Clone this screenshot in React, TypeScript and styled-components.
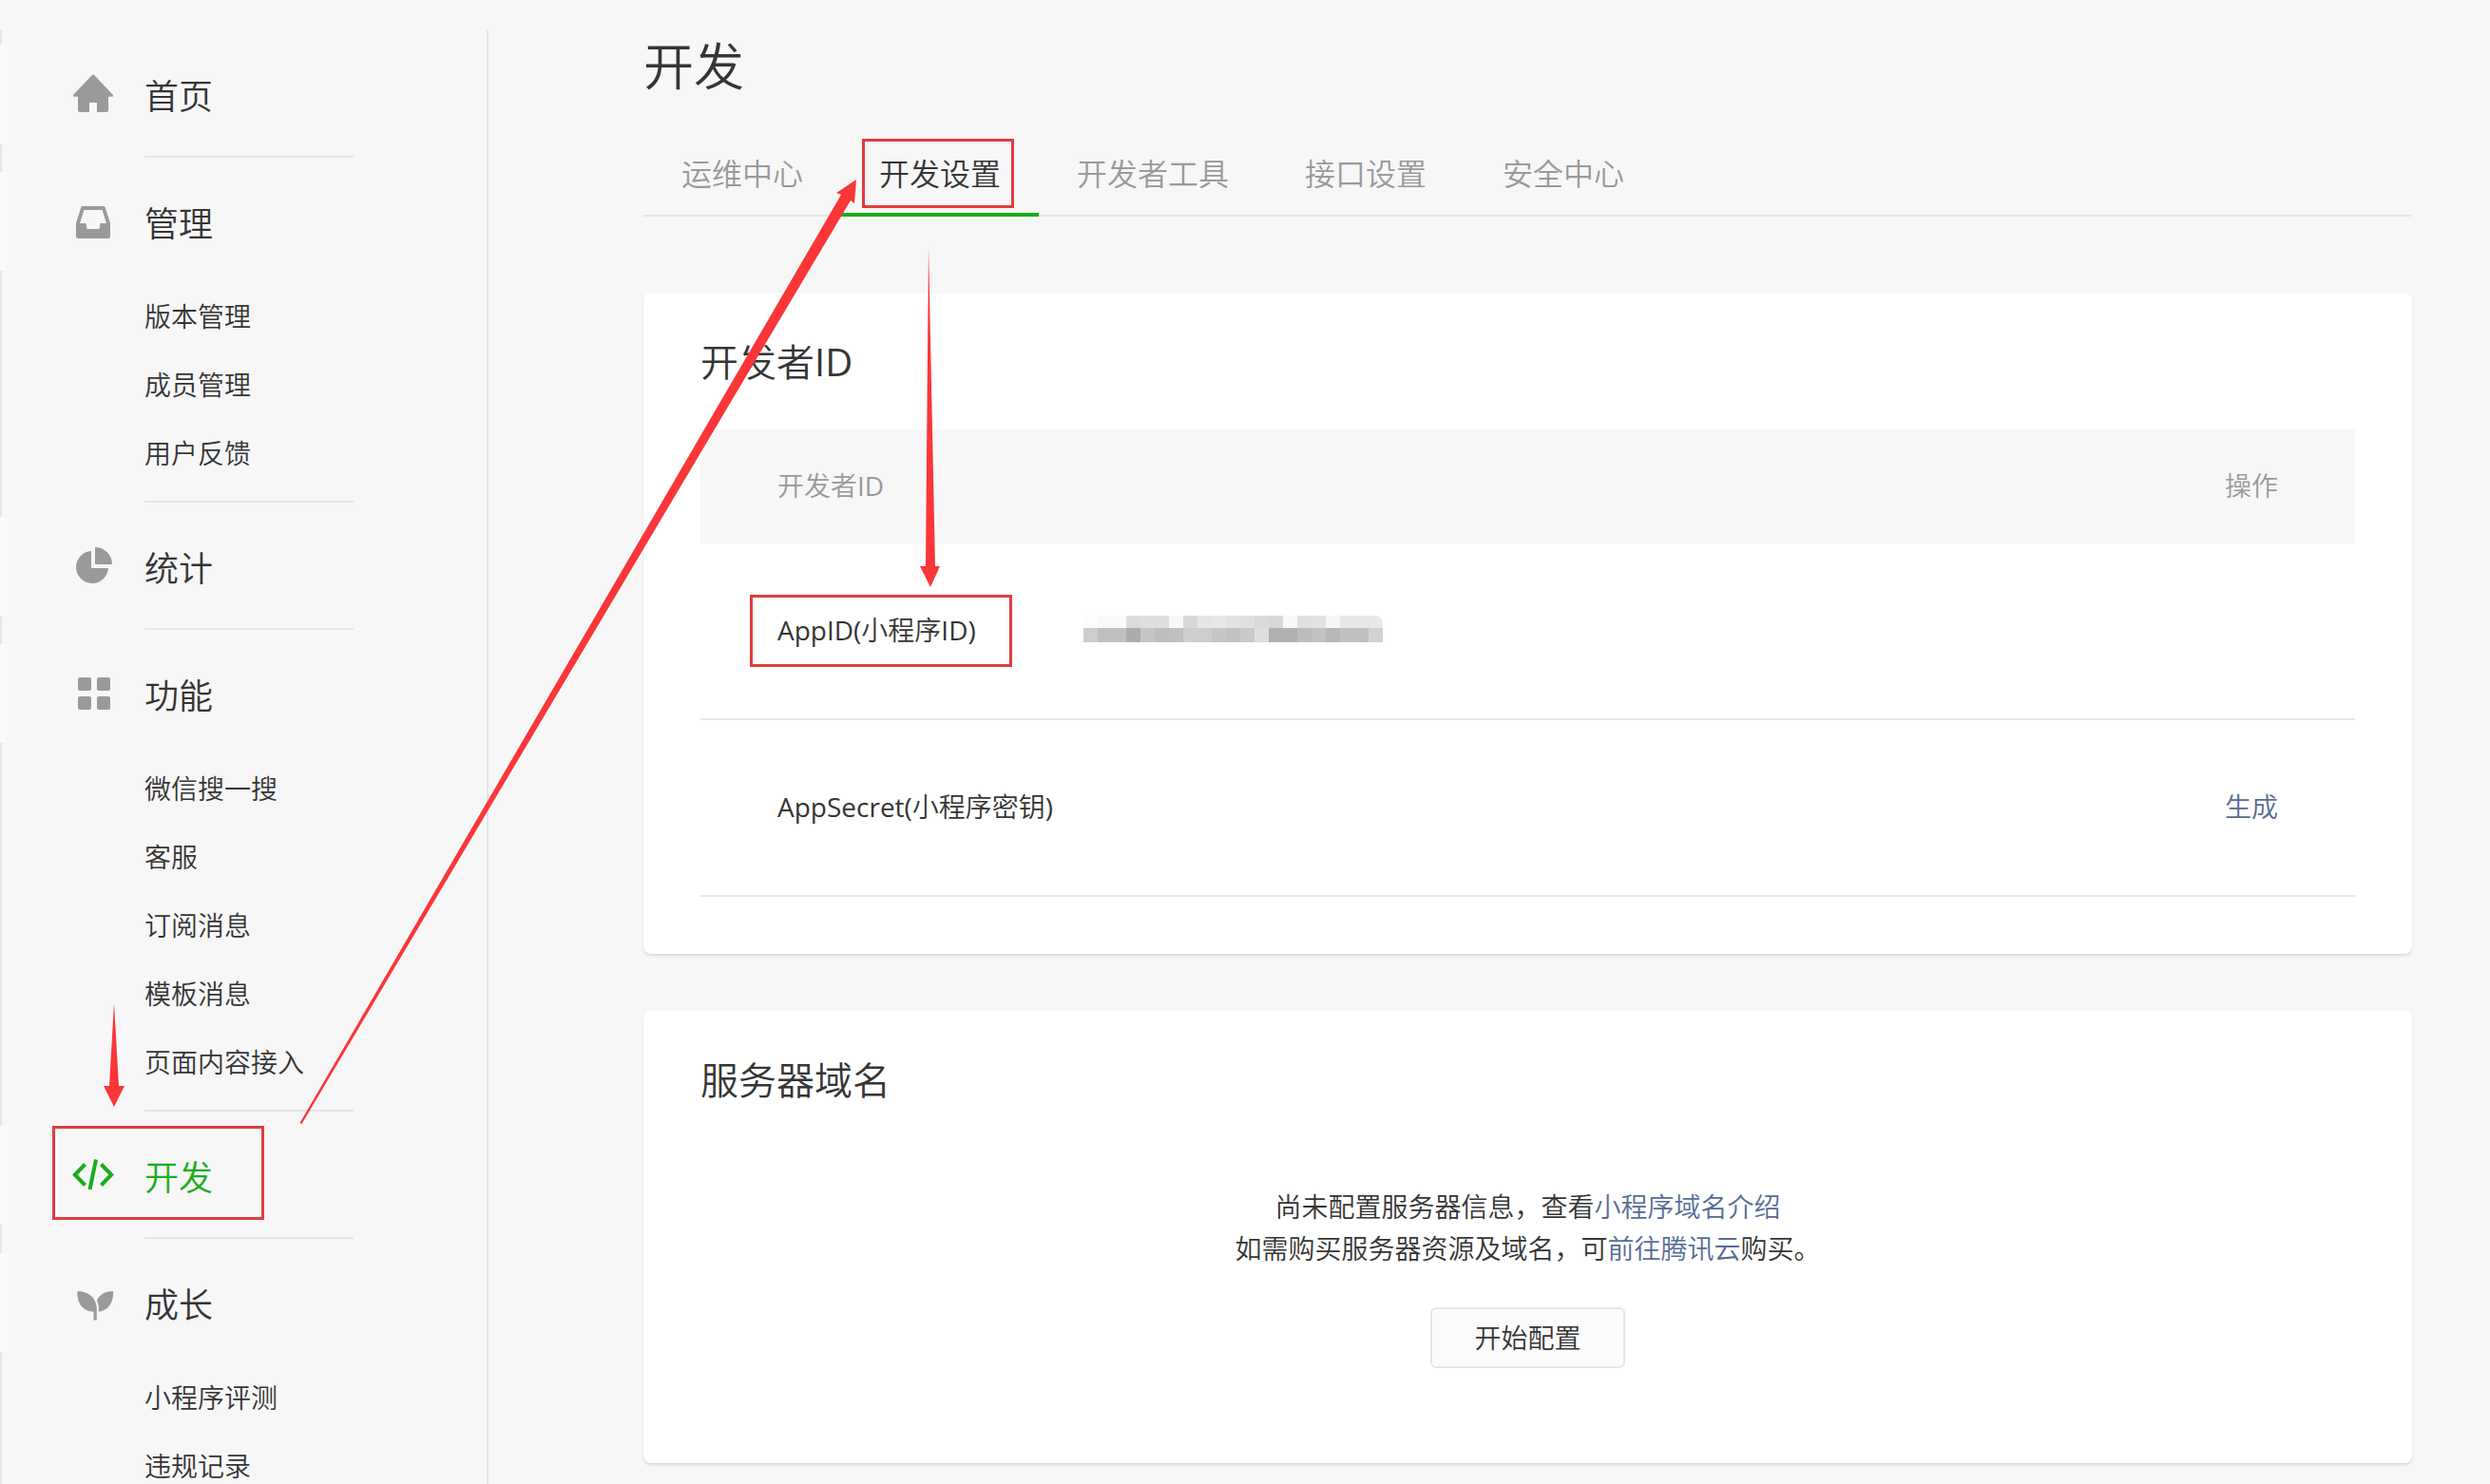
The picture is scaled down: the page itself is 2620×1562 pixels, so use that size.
import React from "react";
import styled, { createGlobalStyle, css } from "styled-components";

const color = {
  page: "#f7f7f8",
  text: "#353535",
  muted: "#9a9a9a",
  line: "#e5e5ea",
  link: "#576b95",
  green: "#1aad19",
  frame: "#e13c40",
  arrow: "#fa3638",
};

const GlobalStyle = createGlobalStyle`
  *, *::before, *::after { box-sizing: border-box; }
  body {
    margin: 0;
    background: ${color.page};
    color: ${color.text};
    font-family: "Open Sans", "Noto Sans CJK SC DemiLight", "Noto Sans CJK SC", sans-serif;
    font-size: 28px;
  }
  a { text-decoration: none; }
  ul { list-style: none; margin: 0; padding: 0; }
`;

const Page = styled.div`
  position: relative;
  display: flex;
  height: 100vh;
  overflow: hidden;
`;

/* Red frame laid over a highlighted element */
const frame = css`
  content: "";
  position: absolute;
  border: 3px solid ${color.frame};
  pointer-events: none;
`;

const Sidebar = styled.nav`
  flex: 0 0 514px;
  margin-top: 32px;
  border-right: 2px solid ${color.line};
`;

const Section = styled.section`
  border-left: 2px solid ${color.line};
  padding-top: 15px;

  &:not(:last-child)::after {
    content: "";
    display: block;
    width: 220px;
    height: 2px;
    margin: 13px 0 0 150px;
    background: ${color.line};
  }
`;

const SectionLink = styled.a<{ $active?: boolean }>`
  position: relative;
  display: flex;
  align-items: center;
  gap: 30px;
  height: 104px;
  margin-left: -2px;
  padding-left: 66px;
  border-left: 8px solid #fafafa;
  font-size: 36px;
  color: ${(p) => (p.$active ? color.green : color.text)};

  ${(p) =>
    p.$active &&
    css`
      &::after {
        ${frame}
        top: 0;
        left: 47px;
        width: 223px;
        height: 99px;
      }
    `}
`;

const Icon = styled.svg`
  flex: none;
  width: 48px;
  height: 48px;
  color: ${color.muted};
`;

const CodeIcon = styled(Icon)`
  color: ${color.green};
`;

const SubList = styled.ul`
  padding: 12px 0 1px 150px;
`;

const SubLink = styled.a`
  display: block;
  line-height: 72px;
  color: ${color.text};
`;

const Main = styled.main`
  flex: 1;
  min-width: 0;
  padding: 34px 82px 0 163px;
`;

const PageTitle = styled.h1`
  margin: 0 0 32px;
  font-size: 53px;
  line-height: 72px;
  font-weight: inherit;
`;

const Tabs = styled.div`
  display: flex;
  border-bottom: 2px solid ${color.line};
`;

const Tab = styled.a<{ $active?: boolean }>`
  position: relative;
  margin-bottom: -2px;
  padding: 4px 40px 0;
  border-bottom: 4px solid ${(p) => (p.$active ? color.green : "transparent")};
  font-size: 32px;
  line-height: 82px;
  color: ${(p) => (p.$active ? color.text : color.muted)};

  ${(p) =>
    p.$active &&
    css`
      &::after {
        ${frame}
        inset: 8px 26px 5px 22px;
      }
    `}
`;

const Cards = styled.div`
  display: flex;
  flex-direction: column;
  gap: 60px;
  margin-top: 80px;
`;

const Card = styled.section`
  padding: 44px 60px 60px;
  border-radius: 8px;
  background: #fff;
  box-shadow: 0 2px 3px rgba(0, 0, 0, 0.12);
`;

const CardTitle = styled.h2`
  margin: 0 0 42px;
  font-size: 40px;
  line-height: 58px;
  font-weight: inherit;
`;

const Table = styled.table`
  width: 100%;
  border-spacing: 0;
  text-align: left;

  th,
  td {
    padding: 0 0 4px;
    font-weight: inherit;
  }
  th {
    height: 120px;
    background: ${color.page};
    color: ${color.muted};
  }
  td {
    height: 186px;
    border-bottom: 2px solid #e7e7e7;
  }
  th:first-child,
  td:first-child {
    width: 403px;
    padding-left: 81px;
  }
  th:last-child,
  td:last-child {
    padding-right: 81px;
    text-align: right;
  }
`;

const Framed = styled.span`
  position: relative;

  &::after {
    ${frame}
    inset: -18px -38px -20px -29px;
  }
`;

const Link = styled.a`
  color: ${color.link};
`;

const Mosaic = styled.div`
  display: grid;
  grid-template-columns: repeat(21, 15px);
  grid-template-rows: 13px 15px;
  width: max-content;
  border-radius: 0 8px 0 0;
  overflow: hidden;
`;

const Tile = styled.span<{ $tone: string }>`
  background: #${(p) => p.$tone + p.$tone + p.$tone};
`;

const Empty = styled.div`
  display: flex;
  flex-direction: column;
  align-items: center;
  gap: 40px;
  padding: 40px 0;
  text-align: center;
`;

const Hint = styled.p`
  margin: 0;
  line-height: 44px;
`;

const Button = styled.button`
  height: 64px;
  padding: 0 44px;
  border: 2px solid #e6e6e6;
  border-radius: 6px;
  background: #fbfbfb;
  color: ${color.text};
  font: inherit;
  line-height: 60px;
`;

const Arrows = styled.svg`
  position: absolute;
  top: 0;
  left: 0;
  width: 1100px;
  height: 1200px;
  pointer-events: none;
  fill: ${color.arrow};
`;

const icons = {
  home: (
    <Icon viewBox="0 0 48 48" fill="currentColor" aria-hidden="true">
      <path d="M22.600 4.200Q24 2.800 25.400 4.200L45 25Q45.600 26.800 44 26.800H40V41Q40 43 38 43H28V33H20V43H10Q8 43 8 41V26.800H4Q2.400 26.800 3 25Z" />
    </Icon>
  ),
  tray: (
    <Icon viewBox="0 0 48 48" fill="currentColor" aria-hidden="true">
      <path
        fillRule="evenodd"
        d="M13 8H35Q36.400 8 36.800 9.400L42 26V40Q42 42 40 42H8Q6 42 6 40V26L11.200 9.400Q11.600 8 13 8ZM14.400 12L10 26H16.500L17.500 32H30.500L31.500 26H38L33.600 12Z"
      />
    </Icon>
  ),
  pie: (
    <Icon viewBox="0 0 48 48" fill="currentColor" aria-hidden="true">
      <path d="M22 8V26H40A17 17 0 1 1 22 8Z" />
      <path d="M26 4A18 18 0 0 1 44 22H26Z" />
    </Icon>
  ),
  grid: (
    <Icon viewBox="0 0 48 48" fill="currentColor" aria-hidden="true">
      <rect x="8" y="7" width="14" height="14" rx="2" />
      <rect x="28" y="7" width="14" height="14" rx="2" />
      <rect x="8" y="27" width="14" height="14" rx="2" />
      <rect x="28" y="27" width="14" height="14" rx="2" />
    </Icon>
  ),
  code: (
    <CodeIcon viewBox="0 0 48 48" fill="none" stroke="currentColor" strokeWidth="4" aria-hidden="true">
      <path d="M15.500 12.500L4.800 23.500L15.500 34.500M32.500 12.500L43.200 23.500L32.500 34.500M27 7.500L20.500 39" />
    </CodeIcon>
  ),
  leaf: (
    <Icon viewBox="0 0 48 48" fill="currentColor" aria-hidden="true">
      <path d="M7.500 12C18 12 27.500 18 27.800 30V42.500H24.500V33.500C14 33.500 6.500 25 7.500 12Z" />
      <path d="M45 12C46 24 39.500 33 29.800 33.500C30.200 28.500 29.600 25 27.800 21.500C31.500 15 37.500 12 45 12Z" />
    </Icon>
  ),
};

const menu: { icon: React.ReactNode; label: string; active?: boolean; items?: string[] }[] = [
  { icon: icons.home, label: "首页" },
  { icon: icons.tray, label: "管理", items: ["版本管理", "成员管理", "用户反馈"] },
  { icon: icons.pie, label: "统计" },
  {
    icon: icons.grid,
    label: "功能",
    items: ["微信搜一搜", "客服", "订阅消息", "模板消息", "页面内容接入"],
  },
  { icon: icons.code, label: "开发", active: true },
  { icon: icons.leaf, label: "成长", items: ["小程序评测", "违规记录"] },
];

const tabs = ["运维中心", "开发设置", "开发者工具", "接口设置", "安全中心"];

// Grey levels of the masked AppID, upper row then lower row
const tones = (
  "fd fa fa dc df de f8 d8 e6 e8 e2 e0 da d8 f8 e0 e2 f6 e8 e8 e8 " +
  "cd c0 c0 ac c6 be c0 ce cd c6 c2 ca de b0 b0 bc c2 b8 c0 c0 d2"
).split(" ");

export default function App() {
  return (
    <>
      <GlobalStyle />
      <Page>
        <Sidebar>
          {menu.map((section) => (
            <Section key={section.label}>
              <SectionLink href="#" $active={section.active}>
                {section.icon}
                {section.label}
              </SectionLink>
              {section.items && (
                <SubList>
                  {section.items.map((item) => (
                    <li key={item}>
                      <SubLink href="#">{item}</SubLink>
                    </li>
                  ))}
                </SubList>
              )}
            </Section>
          ))}
        </Sidebar>

        <Main>
          <PageTitle>开发</PageTitle>
          <Tabs>
            {tabs.map((tab) => (
              <Tab key={tab} href="#" $active={tab === "开发设置"}>
                {tab}
              </Tab>
            ))}
          </Tabs>

          <Cards>
            <Card>
              <CardTitle>开发者ID</CardTitle>
              <Table>
                <thead>
                  <tr>
                    <th>开发者ID</th>
                    <th />
                    <th>操作</th>
                  </tr>
                </thead>
                <tbody>
                  <tr>
                    <td>
                      <Framed>AppID(小程序ID)</Framed>
                    </td>
                    <td>
                      <Mosaic>
                        {tones.map((tone, i) => (
                          <Tile key={i} $tone={tone} />
                        ))}
                      </Mosaic>
                    </td>
                    <td />
                  </tr>
                  <tr>
                    <td>AppSecret(小程序密钥)</td>
                    <td />
                    <td>
                      <Link href="#">生成</Link>
                    </td>
                  </tr>
                </tbody>
              </Table>
            </Card>

            <Card>
              <CardTitle>服务器域名</CardTitle>
              <Empty>
                <Hint>
                  尚未配置服务器信息，查看<Link href="#">小程序域名介绍</Link>
                  <br />
                  如需购买服务器资源及域名，可<Link href="#">前往腾讯云</Link>购买。
                </Hint>
                <Button type="button">开始配置</Button>
              </Empty>
            </Card>
          </Cards>
        </Main>

        <Arrows viewBox="0 0 1100 1200" aria-hidden="true">
          <path d="M120 1056L125 1143H131L120 1165L109 1143H115Z" />
          <path d="M315.500 1182L885 205L880 203L901 189L899 214L895 211L317.500 1183Z" />
          <path d="M977 260L984 596H989L979 618L968 596H974Z" />
        </Arrows>
      </Page>
    </>
  );
}
